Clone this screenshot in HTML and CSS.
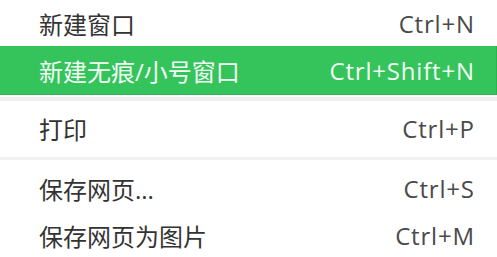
FILE: index.html
```html
<!DOCTYPE html>
<html>
<head>
<meta charset="utf-8">
<link rel="stylesheet" href="styles.css">
</head>
<body>
<div class="menu">
  <div class="item first"><span class="label">新建窗口</span><span class="key">Ctrl+N</span></div>
  <div class="item active"><span class="label">新建无痕/小号窗口</span><span class="key">Ctrl+Shift+N</span></div>
  <div class="sep sep1"></div>
  <div class="item"><span class="label">打印</span><span class="key">Ctrl+P</span></div>
  <div class="sep sep2"></div>
  <div class="item short"><span class="label">保存网页...</span><span class="key">Ctrl+S</span></div>
  <div class="item short"><span class="label">保存网页为图片</span><span class="key">Ctrl+M</span></div>
</div>
</body>
</html>
```
FILE: styles.css
```css
html, body {
  margin: 0;
  padding: 0;
  background: #ffffff;
}
body {
  width: 497px;
  height: 257px;
  overflow: hidden;
  font-family: "Noto Sans CJK SC", "Noto Sans", sans-serif;
}
.menu {
  display: flex;
  flex-direction: column;
}
.item {
  display: flex;
  align-items: center;
  justify-content: space-between;
  height: 48px;
  padding: 0 23px 0 39px;
  color: #333333;
  box-sizing: border-box;
}
.label {
  font-size: 24px;
  font-family: "Open Sans", "Noto Sans CJK SC", sans-serif;
}
.key {
  font-family: "Open Sans", sans-serif;
  font-size: 24px;
  letter-spacing: 0.8px;
  margin-right: -0.8px;
  color: #4a4a4a;
}
.item.first {
  height: 46px;
}
.item.short {
  height: 47px;
}
.item.active {
  height: 49px;
  background: #35c35b;
  color: #f2fff5;
  border-bottom: 1px solid #2db250;
  border-right: 1px solid #2db250;
  padding-right: 22px;
}
.item.active .key {
  color: #f2fff5;
}
.sep {
  height: 4px;
  background: #f0f0f0;
}
.sep1 {
  margin: 2px 0 3px;
}
.sep2 {
  height: 3px;
  margin: 5px 0 5px;
}
```
